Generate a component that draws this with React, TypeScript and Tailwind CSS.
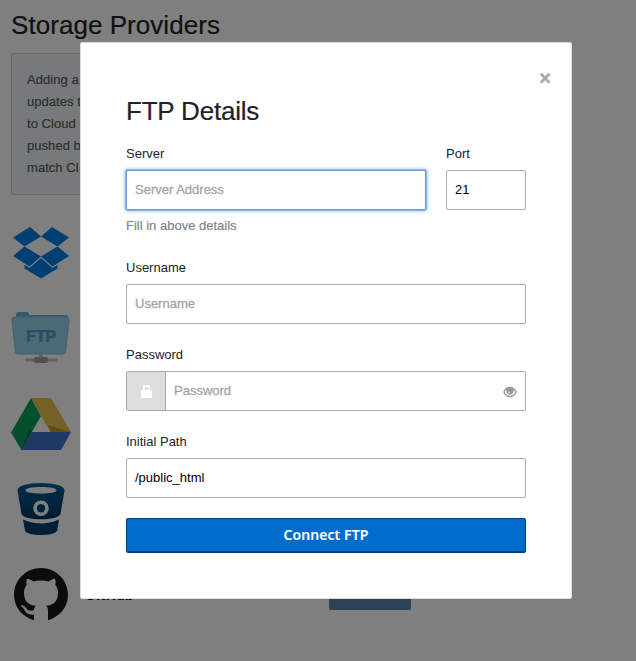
const label = "block h-[18px] text-[13px] leading-[18px] text-[#222]";
const input =
  "block h-10 w-full rounded-[2px] border border-[#aaa] bg-white px-2 pb-[2px] text-[13px] text-black outline-none placeholder:text-[#a5a5a5] placeholder:[-webkit-text-stroke:0.3px_#a5a5a5]";

function Dropbox() {
  return (
    <svg className="block h-[52px] w-[56px]" viewBox="0 0 56 52" fill="#007ee5">
      <path d="M17 0 28 9.500 11.500 19.500 0 10.500Z" />
      <path d="M39 0 56 10.500 44.500 19.500 28 9.500Z" />
      <path d="M11.500 19.500 28 29.500 16.500 39.500 0 29Z" />
      <path d="M44.500 19.500 56 29 39.500 39.500 28 29.500Z" />
      <path d="M28 31 39.500 41 44.500 37.800V41.500L28 51.500 11.500 41.500V37.800L16.500 41Z" />
    </svg>
  );
}

function FtpFolder() {
  return (
    <svg className="block h-[52px] w-[60px]" viewBox="0 0 60 52">
      <path d="M5 6V2Q5 0 7 0H16Q18 0 18 3H55Q57 3 57 5V8H2V6Z" fill="#6db2d2" />
      <path d="M3 5H56Q58 5 58 8L54.500 40Q54 42 52 42H7Q5 42 4.500 40L1 8Q1 5 3 5Z" fill="#98d2ed" stroke="#83c0de" />
      <text x="30" y="30" textAnchor="middle" fill="#539fca" fontFamily="DejaVu Sans" fontWeight="bold" fontSize="16" textLength="31">FTP</text>
      <path d="M28 42h4v3h-4zM14 46.500h32v3H14z" fill="#c2c2c2" />
      <rect x="23" y="45" width="14" height="6" rx="2" fill="#a0a0a0" />
    </svg>
  );
}

function Drive() {
  return (
    <svg className="block h-[52px] w-[60px]" viewBox="0 0 60 52">
      <path d="M20 0 30 18 10.500 52 0 34.500Z" fill="#0b9e58" />
      <path d="M20 0H40L60 34H39.500Z" fill="#eac34a" />
      <path d="M20.500 34H60L50 52H10.500Z" fill="#3e70cd" />
      <path d="m20.500 34-2-3.500L10.500 52Z" fill="#087542" />
      <path d="M37 27 60 34H39.500Z" fill="#c49b28" />
    </svg>
  );
}

function Bitbucket() {
  return (
    <svg className="block h-[52px] w-[48px]" viewBox="0 0 48 52">
      <defs>
        <linearGradient id="bucket" x1="0" y1="0" x2="0" y2="1">
          <stop stopColor="#006196" />
          <stop offset="1" stopColor="#003366" />
        </linearGradient>
      </defs>
      <path fillRule="evenodd" fill="url(#bucket)" d="M24 0C10 0 0 3 .5 7.500L4.500 31C7 38 41 38 43.500 31L47.500 7.500C48 3 38 0 24 0ZM24 4c9 0 15.500 1.200 15.500 3.300S33 10.600 24 10.600 8.500 9.400 8.500 7.300 15 4 24 4ZM24 17.500a7.800 7.800 0 1 0 0 15.600 7.800 7.800 0 0 0 0-15.600Z" />
      <circle cx="24" cy="25.300" r="4.200" fill="#00477b" />
      <path d="M6 36.500Q24 44.500 42 36.500L40 48Q37 52 24 52T8 48Z" fill="#003a70" />
    </svg>
  );
}

function Github() {
  return (
    <svg className="ml-[3px] block size-[54px] shrink-0" viewBox="0 0 54 54" fill="#191717">
      <path d="M20 52.200C8.500 49 0 39 0 27 0 12 12 0 27 0s27 12 27 27c0 12-8.500 22-20 25.200V43c0-2.500-.6-4-2-5.200C39 37 44 34 44 24.500c0-3-1-5.500-2.700-7.500.5-2 .5-4-.3-6.200-2 0-4 1-6.300 2.600-5-1.100-10.500-1.100-15.400 0C17 11.800 15 10.800 13 10.800c-.8 2.200-.8 4.200-.3 6.200C11 19 10 21.500 10 24.500 10 34 15 37 22 37.800c-1.200 1-1.900 2.500-2 4.200-4 1.500-6.500.2-8-2-1.300-1.900-2.500-3-4.500-2.800-1 .3-.5 1 .5 1.600 3 2 2.700 7.200 8.500 7.800 1.500.2 2.500 0 3.500-.2Z" />
    </svg>
  );
}

function Lock() {
  return (
    <svg className="block h-[14px] w-[11px]" viewBox="0 0 11 14" fill="white">
      <path fillRule="evenodd" d="M2 6V2Q2 1 3 1H8Q9 1 9 2V6H10.500Q11 6 11 6.500V13.500Q11 14 10.500 14H.5Q0 14 0 13.500V6.500Q0 6 .5 6ZM3.800 6H7.200V3H3.800Z" />
    </svg>
  );
}

function Eye() {
  return (
    <svg className="mt-px mr-2 block h-[12px] w-[14px] shrink-0" viewBox="0 0 14 12" fill="none">
      <path d="M.8 6Q3 1.500 7 1.500T13.200 6Q11 10.500 7 10.500T.8 6Z" stroke="#999" strokeWidth="1.400" />
      <path d="M3.200 2.500Q7 .8 10.800 2.500C11.200 6.500 9.500 8.800 7 8.800S2.800 6.500 3.200 2.500Z" fill="#999" />
      <path d="M5 5.300Q5.300 7 7 7.200" stroke="white" strokeWidth=".8" />
    </svg>
  );
}

export default function App() {
  return (
    <div className="relative h-[661px] w-[636px] overflow-hidden bg-white font-['Liberation_Sans',sans-serif]">
      <main className="pt-2 pl-[11px]">
        <h1 className="h-[34px] text-[26px] leading-[34px] text-[#222] tracking-[0.05px] [-webkit-text-stroke:0.2px_#222]">Storage Providers</h1>
        <section className="mt-[11px] h-[142px] w-[400px] rounded-[2px] border border-[#c7d4d8] bg-[#edf5f7] pt-[15px] pl-[15px] text-[13px] leading-[22px] tracking-[0.05px] text-[#5d5d5d] [-webkit-text-stroke:0.2px_#5d5d5d]">
          <p>Adding a</p>
          <p>updates t</p>
          <p>to Cloud</p>
          <p>pushed b</p>
          <p>match Cl</p>
        </section>
        <div className="mt-8 flex w-[60px] flex-col items-center">
          <Dropbox />
          <div className="mt-[33px]"><FtpFolder /></div>
          <div className="mt-[34px]"><Drive /></div>
          <div className="mt-[33px]"><Bitbucket /></div>
        </div>
        <div className="mt-[33px] flex h-[54px]">
          <Github />
          <span className="mt-[18px] ml-[17px] w-[244px] text-[14px] leading-[18px] font-bold tracking-[0.4px] text-black">GitHub</span>
          <span className="h-[42px] w-[82px] rounded-[2px] bg-[#5985ae]" />
        </div>
      </main>
      <div className="absolute inset-0 bg-black/50" />
      <div className="absolute top-[42px] left-[80px] h-[557px] w-[492px] rounded-[2px] border border-[#d9dddd] bg-white px-[45px]">
        <div className="flex h-[50px] justify-end pt-[21px]">
          <button className="-mr-[25px] h-7 text-[20px] leading-7 font-bold text-[#aaa] [-webkit-text-stroke:0.5px_#aaa]">×</button>
        </div>
        <h2 className="h-[36px] text-[26px] leading-[36px] tracking-[-0.2px] text-[#222] [-webkit-text-stroke:0.2px_#222]">FTP Details</h2>
        <div className="mt-[16px] flex gap-5">
          <div className="w-[300px]">
            <label className={label}>Server</label>
            <input className="mt-[7px] block h-10 w-full rounded-[2px] border border-[#6a9dcc] bg-white px-2 pb-[2px] text-[13px] shadow-[0_0_0_1px_#8db7de,0_0_3px_2px_#b9d8f4] outline-none placeholder:text-[#a5a5a5] placeholder:[-webkit-text-stroke:0.3px_#a5a5a5]" placeholder="Server Address" />
            <p className="mt-[7px] h-[18px] text-[13px] leading-[18px] text-[#858585] [-webkit-text-stroke:0.2px_#858585]">Fill in above details</p>
          </div>
          <div className="w-20">
            <label className={label}>Port</label>
            <div className="mt-[7px]"><input className={input} defaultValue="21" /></div>
          </div>
        </div>
        <div className="mt-[24px]">
          <label className={label}>Username</label>
          <div className="mt-[7px]"><input className={input} placeholder="Username" /></div>
        </div>
        <div className="mt-[22px]">
          <label className={label}>Password</label>
          <div className="mt-[7px] flex h-10 items-center overflow-hidden rounded-[2px] border border-[#aaa]">
            <span className="flex h-full w-[39px] items-center justify-center border-r border-[#aaa] bg-[#ddd]"><Lock /></span>
            <input className="h-full min-w-0 flex-1 px-2 pb-[2px] text-[13px] outline-none placeholder:text-[#a5a5a5] placeholder:[-webkit-text-stroke:0.3px_#a5a5a5]" placeholder="Password" />
            <Eye />
          </div>
        </div>
        <div className="mt-[22px]">
          <label className={label}>Initial Path</label>
          <div className="mt-[7px]"><input className={input} defaultValue="/public_html" /></div>
        </div>
        <button className="mt-5 block h-[35px] w-full rounded-[2px] border border-b-2 border-[#00427d] bg-[#006dcc] font-['Open_Sans',sans-serif] text-[14px] leading-8 font-semibold tracking-[0.15px] text-white [-webkit-text-stroke:0.2px_white]">Connect FTP</button>
      </div>
    </div>
  );
}
